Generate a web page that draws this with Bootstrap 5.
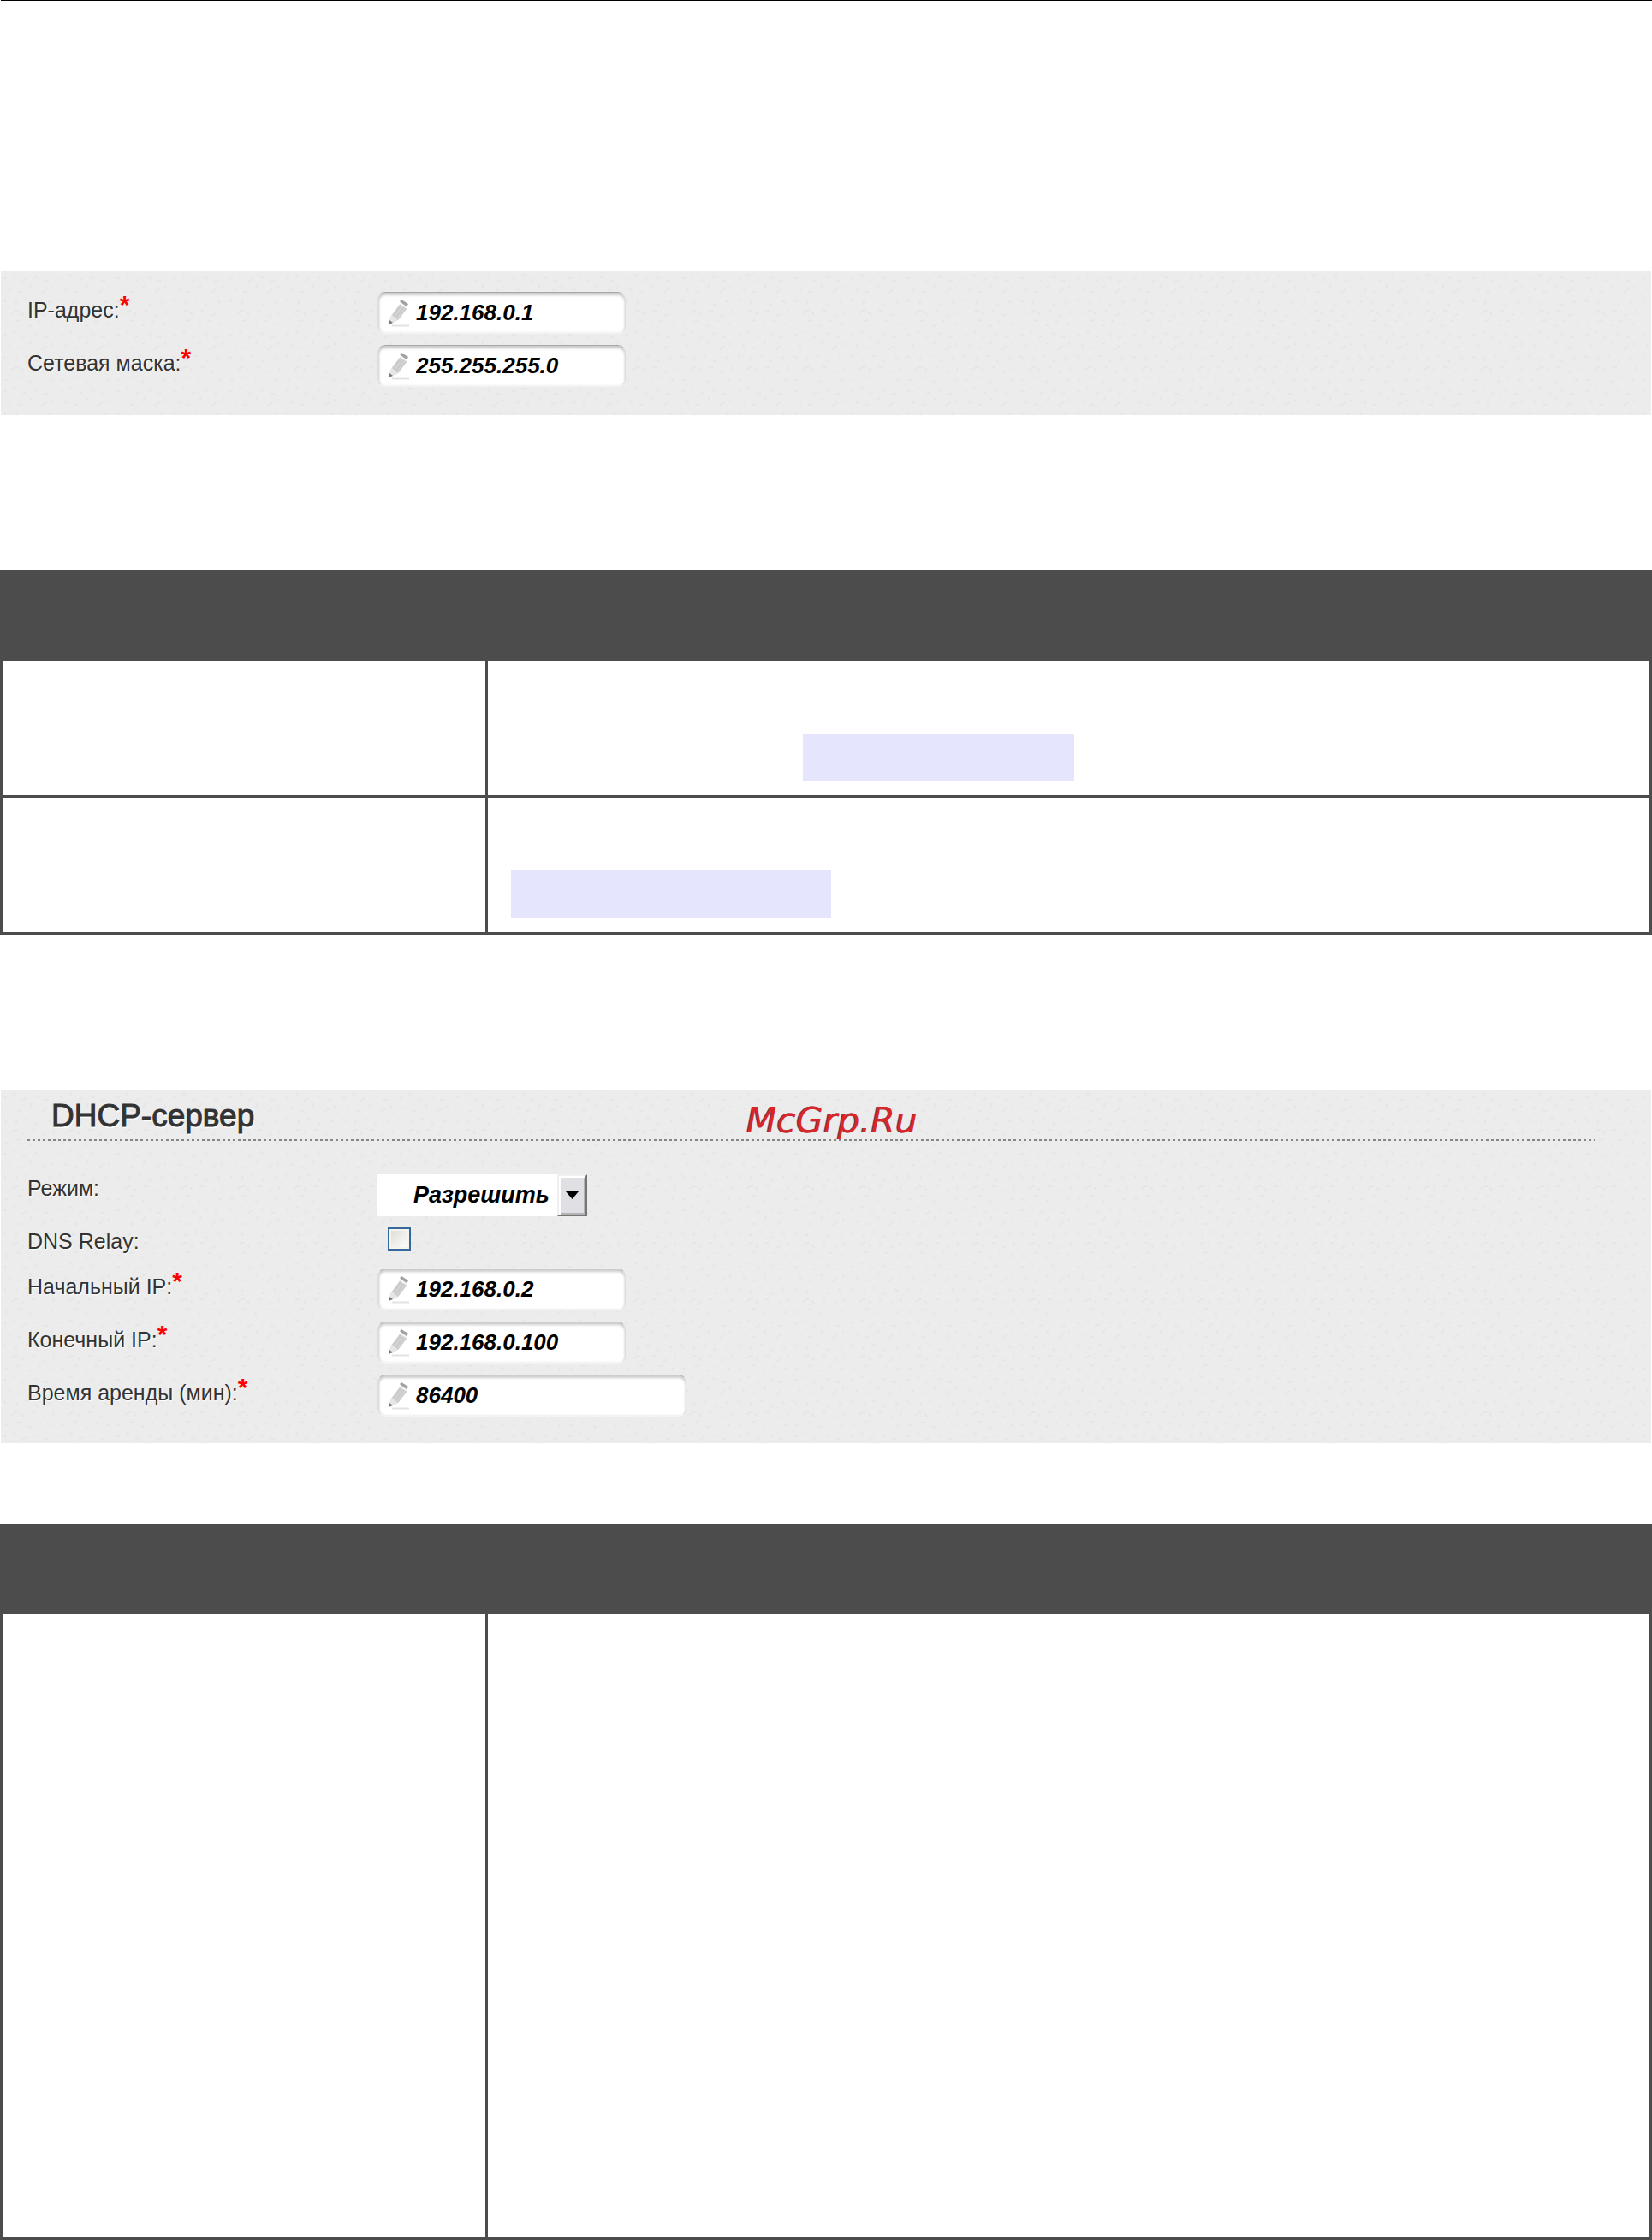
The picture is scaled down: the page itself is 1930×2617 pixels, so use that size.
<!DOCTYPE html>
<html lang="ru">
<head>
<meta charset="utf-8">
<meta name="viewport" content="width=device-width, initial-scale=1">
<title>DHCP-сервер</title>
<link href="https://cdn.jsdelivr.net/npm/bootstrap@5.3.0/dist/css/bootstrap.min.css" rel="stylesheet">
<style>
  body { font-family: "Liberation Sans", sans-serif; color: #333; background: #fff; }
  .page-rule { border-top: 1px solid #000; margin-left: 1px; height: 317px; }
  .panel {
    margin: 0 1px;
    padding-left: 31px;
    background: #ececec url("data:image/svg+xml,%3Csvg xmlns='http://www.w3.org/2000/svg' width='66' height='66'%3E%3Cg fill='none' stroke='%23e2e2e2' stroke-width='1.5' stroke-linecap='round' opacity='.7'%3E%3Cpath d='M4 8h2M15 4l2 1M25 12l4-3M40 6l3 2M52 11h3M9 20l2 2M20 24h3M34 19l2-3M48 25l5-4M60 18v2M3 33l3 3M17 38l2-3M29 33h2M41 38l2 2M55 34l3 3M13 49l4-3h3M24 48l2 3M36 46h3M49 52l3-2M62 46l-1 3M5 61h2M19 58l4-1M33 62l2 2M44 58h2M57 62l3-2'/%3E%3C/g%3E%3C/svg%3E");
  }
  .panel-net { padding-top: 24px; padding-bottom: 20px; margin-bottom: 181px; }
  .panel-dhcp { padding-bottom: 18px; margin: 182px 1px 94px; }
  .panel-title {
    height: 59px; margin: 0 66px 39px 0; padding-left: 28px;
    font-size: 37px; line-height: 59px; font-weight: 400; color: #333;
    -webkit-text-stroke: 1px #333;
    text-shadow: 1px 2px 1px #fff;
    background: repeating-linear-gradient(90deg, #858585 0 3px, transparent 3px 6px) left bottom / 100% 2px no-repeat;
  }
  .field { min-height: 35px; margin-bottom: 13px; }
  .field-label { width: 409px; line-height: 32px; font-size: 25px; text-shadow: 1px 1px 1px #fff; }
  .needed { padding-top: 5px; }
  .needed sup { color: #f00; font-size: 30px; font-weight: 700; line-height: 0; top: 0; vertical-align: 5px; text-shadow: none; }
  .entry { width: 290px; }
  .entry-wide { width: 361px; }
  .entry input {
    height: 49px; padding: 0 12px 0 44px;
    border: 1px solid; border-color: #a8a8a8 #ddd #f4f4f4; border-radius: 9px;
    box-shadow: inset 0 3px 3px #ccc, inset 1px 0 3px #ddd;
    font-size: 26px; font-weight: 700; font-style: italic; color: #000; background: #fff;
  }
  .pencil { left: 11px; top: 8px; width: 30px; height: 34px; }
  .mode { width: 245px; }
  .mode select {
    height: 49px; padding: 0 34px 0 42px; border: 0; border-radius: 0;
    font-size: 27px; font-weight: 700; font-style: italic; color: #000; background: #fff;
  }
  .drop { width: 35px; top: 0; right: 0; bottom: 0; background: #e0dfe3; border: 2px solid; border-color: #f1eff2 #77756f #77756f #f1eff2; box-shadow: inset 2px 2px #fff, inset -2px -2px #b4b2b8; pointer-events: none; }
  .form-check-input[type=checkbox].tick {
    width: 27px; height: 27px; margin: 0 0 0 12px; border: 2px solid #34699a; border-radius: 0;
    background: linear-gradient(135deg, #dcdcd5, #fff);
    box-shadow: inset 0 0 0 2px #f4f4f0;
  }
  .brand { left: 871px; top: 12px; font: italic 41px/46px "DejaVu Sans", sans-serif; color: #dc2626; text-shadow: -1px 0 #5a4878; }
  .grid-table { width: 100%; border-collapse: collapse; table-layout: fixed; }
  .grid-table th { height: 103px; background: #4c4c4c; }
  .grid-table th, .grid-table td { border: 3px solid #4c4c4c; padding: 0; }
  .grid-table .col-name { width: 567px; }
  .grid-table td { height: 160px; vertical-align: bottom; }
  .grid-table .tall { height: 731px; }
  .hint { background: #e5e5fe; width: 317px; height: 54px; margin: 0 0 17px 368px; }
  .hint-left { width: 374px; height: 55px; margin-left: 27px; }
</style>
<script src="https://cdn.jsdelivr.net/npm/bootstrap@5.3.0/dist/js/bootstrap.bundle.min.js"></script>
</head>
<body>
<svg class="d-none" aria-hidden="true">
  <symbol id="pencil" viewBox="0 0 30 34">
    <path d="M6 31.500h20" stroke="#e2e2e2" stroke-width="2"/>
    <path d="M2 30l2-9L16 5l8 6-12 15z" fill="#e6e6e6"/>
    <path d="M6 19L15 7l8 5-10 13z" fill="#cbcbcb"/>
    <path d="M9 21L18 9M12 23l9-12" stroke="#dcdcdc" stroke-width="1"/>
    <path d="M15 3l2-2 8 5-2 4z" fill="#a2a2a2"/>
    <path d="M15 5l8 5" stroke="#f6f6f6" stroke-width="1.500"/>
    <path d="M2 30l1-5 4 3z" fill="#777"/>
  </symbol>
</svg>
<main class="container-fluid p-0">
  <div class="page-rule"></div>

  <form class="panel panel-net">
    <div class="field d-flex align-items-start">
      <label class="field-label needed flex-shrink-0" for="ip">IP-адрес:<sup>*</sup></label>
      <div class="entry position-relative">
        <input class="form-control" id="ip" type="text" value="192.168.0.1">
        <svg class="pencil position-absolute" aria-hidden="true"><use href="#pencil"/></svg>
      </div>
    </div>
    <div class="field d-flex align-items-start">
      <label class="field-label needed flex-shrink-0" for="netmask">Сетевая маска:<sup>*</sup></label>
      <div class="entry position-relative">
        <input class="form-control" id="netmask" type="text" value="255.255.255.0">
        <svg class="pencil position-absolute" aria-hidden="true"><use href="#pencil"/></svg>
      </div>
    </div>
  </form>

  <table class="grid-table">
    <colgroup><col class="col-name"><col></colgroup>
    <thead><tr><th></th><th></th></tr></thead>
    <tbody>
      <tr><td></td><td><div class="hint"></div></td></tr>
      <tr><td></td><td><div class="hint hint-left"></div></td></tr>
    </tbody>
  </table>

  <form class="panel panel-dhcp position-relative">
    <h2 class="panel-title">DHCP-сервер</h2>
    <div class="brand position-absolute">McGrp.Ru</div>
    <div class="field d-flex align-items-start">
      <label class="field-label flex-shrink-0" for="mode">Режим:</label>
      <div class="mode position-relative">
        <select class="form-select" id="mode"><option>Разрешить</option></select>
        <span class="drop position-absolute d-flex align-items-center justify-content-center">
          <svg width="15" height="9" aria-hidden="true"><path d="M0 0h15L7.500 9z"/></svg>
        </span>
      </div>
    </div>
    <div class="field d-flex align-items-start">
      <label class="field-label flex-shrink-0" for="relay">DNS Relay:</label>
      <input class="form-check-input tick" id="relay" type="checkbox">
    </div>
    <div class="field d-flex align-items-start">
      <label class="field-label needed flex-shrink-0" for="start-ip">Начальный IP:<sup>*</sup></label>
      <div class="entry position-relative">
        <input class="form-control" id="start-ip" type="text" value="192.168.0.2">
        <svg class="pencil position-absolute" aria-hidden="true"><use href="#pencil"/></svg>
      </div>
    </div>
    <div class="field d-flex align-items-start">
      <label class="field-label needed flex-shrink-0" for="end-ip">Конечный IP:<sup>*</sup></label>
      <div class="entry position-relative">
        <input class="form-control" id="end-ip" type="text" value="192.168.0.100">
        <svg class="pencil position-absolute" aria-hidden="true"><use href="#pencil"/></svg>
      </div>
    </div>
    <div class="field d-flex align-items-start">
      <label class="field-label needed flex-shrink-0" for="lease">Время аренды (мин):<sup>*</sup></label>
      <div class="entry entry-wide position-relative">
        <input class="form-control" id="lease" type="text" value="86400">
        <svg class="pencil position-absolute" aria-hidden="true"><use href="#pencil"/></svg>
      </div>
    </div>
  </form>

  <table class="grid-table">
    <colgroup><col class="col-name"><col></colgroup>
    <thead><tr><th></th><th></th></tr></thead>
    <tbody>
      <tr><td class="tall"></td><td class="tall"></td></tr>
    </tbody>
  </table>
</main>
</body>
</html>
